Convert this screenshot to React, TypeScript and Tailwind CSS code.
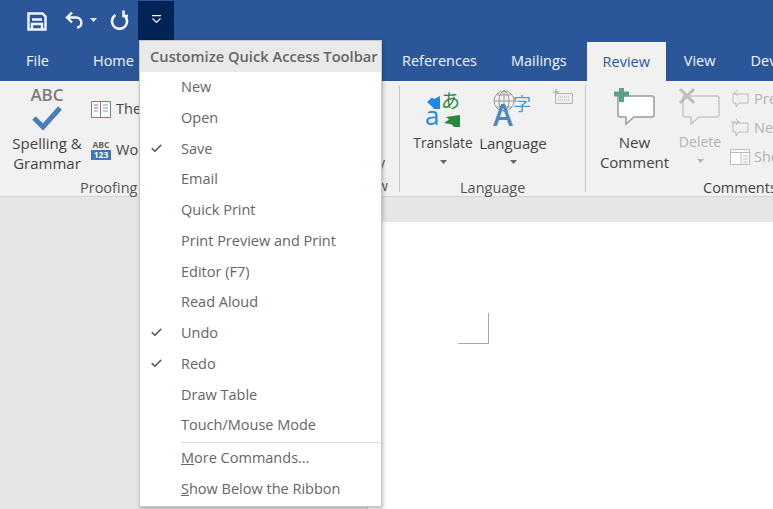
import type { ReactNode } from 'react'
import { Check } from 'lucide-react'

const font = { fontFamily: '"Open Sans", "Noto Sans", sans-serif' }

const menuItems = [
  { label: 'New' },
  { label: 'Open' },
  { label: 'Save', checked: true },
  { label: 'Email' },
  { label: 'Quick Print' },
  { label: 'Print Preview and Print' },
  { label: 'Editor (F7)' },
  { label: 'Read Aloud' },
  { label: 'Undo', checked: true },
  { label: 'Redo', checked: true },
  { label: 'Draw Table' },
  { label: 'Touch/Mouse Mode' },
]

function Caret({ className = '' }: { className?: string }) {
  return (
    <svg width="7" height="4" viewBox="0 0 7 4" className={className}>
      <path d="M0 0h7L3.500 4z" fill="currentColor" />
    </svg>
  )
}

function QuickAccess() {
  return (
    <div className="flex h-[40px] items-start pl-[27px] text-white">
      <svg width="20" height="19" viewBox="0 0 20 19" className="mt-[12px]" fill="none" stroke="#f2f5fa" strokeWidth="2.400">
        <path d="M1.500 1.500h14l3 3v13h-17z" />
        <path d="M5 7.500h10M5 17v-5h10v5" />
      </svg>
      <svg width="19" height="18" viewBox="0 0 19 18" className="ml-[18px] mt-[11px]" fill="none" stroke="#f2f5fa" strokeWidth="2.400">
        <path d="M7 1.500 2 6.500l5 5" />
        <path d="M2 6.500h9c7 0 7 10 1 10" />
      </svg>
      <Caret className="ml-[6px] mt-[18px] text-[#e6ecf5]" />
      <svg width="19" height="20" viewBox="0 0 19 20" className="ml-[13px] mt-[10px]" fill="none" stroke="#f2f5fa" strokeWidth="2.600">
        <path d="M5.500 5a7.500 7.500 0 1 0 8 0" />
        <path d="M13.500 .5v5.500h4.500" />
      </svg>
      <div className="ml-[9px] mt-px flex h-[39px] w-[36px] items-start justify-center bg-[#012456] pt-[14px]">
        <svg width="11" height="9" viewBox="0 0 11 9" fill="none" stroke="#f2f5fa" strokeWidth="1.200">
          <path d="M1 .6h9M1.500 3.500l4 4 4-4" />
        </svg>
      </div>
    </div>
  )
}

function Tabs() {
  return (
    <div className="flex h-[41px] items-center whitespace-nowrap text-[14.500px] text-[#f2f5fa] [&>span]:shrink-0">
      <span className="ml-[26px]">File</span>
      <span className="ml-[44px]">Home</span>
      <span className="ml-[268px]">References</span>
      <span className="ml-[34px]">Mailings</span>
      <span className="ml-[20px] flex h-[39px] w-[79px] items-center justify-center self-end bg-[#f1f1f1] text-[#2b579a]">
        Review
      </span>
      <span className="ml-[18px]">View</span>
      <span className="ml-[35px]">Developer</span>
    </div>
  )
}

function ProofingGroup() {
  return (
    <div className="relative flex w-[400px] shrink-0 flex-col border-r border-[#c6c6c6]">
      <div className="flex h-[94px] shrink-0">
        <div className="flex w-[94px] flex-col items-center text-center text-[15px] leading-[20px] text-[#444]">
          <span className="h-[21px] text-[17px] font-semibold leading-[19px] text-[#7b7b7b]">ABC</span>
          <svg width="30" height="24" viewBox="0 0 30 24" fill="none" stroke="#4a7fb5" strokeWidth="5" className="mb-[3px]">
            <path d="M2 12l9 9L28 2" />
          </svg>
          <span className="whitespace-nowrap">Spelling &amp;</span>
          <span>Grammar</span>
        </div>
        <div className="-ml-[3px] flex w-[60px] flex-col gap-[22px] pt-[15px] text-[14.500px] leading-[18px] text-[#444]">
          <div className="flex items-center gap-[5px]">
            <svg width="20" height="17" viewBox="0 0 20 17" fill="#fff" stroke="#5b87b8">
              <path d="M.5.500h9v16h-9zM9.500.500h10v16h-10z" />
              <path d="M3 4h4M3 7h4" stroke="#d9634c" />
              <path d="M3 10h4M12 4h5M12 7h5M12 10h5" stroke="#999" />
            </svg>
            <span>The</span>
          </div>
          <div className="flex items-center gap-[5px]">
            <div className="flex w-[20px] flex-col items-center font-bold text-[#666]">
              <span className="text-[8.500px] leading-[10px]">ABC</span>
              <span className="w-full bg-[#3f77b2] text-center text-[8.500px] leading-[10px] text-white">123</span>
            </div>
            <span>Wo</span>
          </div>
        </div>
      </div>
      <span className="ml-[80px] text-[14.500px] leading-[18px] text-[#555]">Proofing</span>
      <span className="absolute left-[378px] top-[69px] text-[14px] leading-[18px] text-[#555]">y</span>
      <span className="absolute left-[377px] top-[92px] text-[14px] leading-[18px] text-[#555]">w</span>
    </div>
  )
}

function LanguageGroup() {
  return (
    <div className="flex w-[186px] shrink-0 flex-col border-r border-[#c6c6c6]">
      <div className="flex h-[94px] shrink-0 text-[15px] leading-[20px] text-[#444]">
        <div className="ml-[11px] flex w-[64px] flex-col items-center pt-[5px]">
          <svg width="36" height="37" viewBox="0 0 36 37" className="overflow-visible">
            <path d="M15 6v13H9L7 16.500 2 12l5-4.500L9 9z" fill="#1f8ae0" />
            <text x="16" y="18" fontSize="19" fill="#2a8a3c" fontFamily='"Noto Sans CJK JP", sans-serif'>あ</text>
            <text x="0" y="35" fontSize="26" fill="#1f8ae0" fontFamily='"Open Sans", sans-serif'>a</text>
            <path d="M35 25v12H29l-2-2.500-8-1.500 5-3.500-3-2.500z" fill="#2a8a3c" />
          </svg>
          <span className="mt-[6px] text-[13.700px]">Translate</span>
          <Caret className="mt-[7px] text-[#666]" />
        </div>
        <div className="ml-[4px] flex w-[68px] flex-col items-center pt-[5px]">
          <svg width="42" height="38" viewBox="0 0 42 38" className="overflow-visible">
            <circle cx="12" cy="11" r="10" fill="none" stroke="#9a9a9a" />
            <path d="M2 11h20M12 1v20M5 5h14M5 17h14" stroke="#9a9a9a" />
            <ellipse cx="12" cy="11" rx="5" ry="10" fill="none" stroke="#9a9a9a" />
            <text x="1" y="36" fontSize="30" fill="#4d86c0" fontFamily='"Open Sans", sans-serif' fontWeight="600">A</text>
            <text x="21" y="21" fontSize="18" fill="#4d9bd0" fontFamily='"Noto Sans CJK JP", sans-serif'>字</text>
          </svg>
          <span className="mt-[5px]">Language</span>
          <Caret className="mt-[7px] text-[#666]" />
        </div>
        <svg width="20" height="16" viewBox="0 0 20 16" className="ml-[6px] mt-[4px]" fill="#efeceb" stroke="#b5b5b5">
          <path d="M2.500 4.500h17v10h-17z" />
          <path d="M5 8h12M5 11h12" strokeDasharray="1 1" />
          <path d="M3 0v6M0 3h6" stroke="#a9bdb3" strokeWidth="1.500" />
        </svg>
      </div>
      <span className="ml-[60px] text-[14.500px] leading-[18px] text-[#555]">Language</span>
    </div>
  )
}

function CommentBubble({ faded = false, children }: { faded?: boolean; children?: ReactNode }) {
  return (
    <svg width="42" height="38" viewBox="0 0 42 38" fill={faded ? '#f3f0f2' : '#fff'} stroke={faded ? '#c6c6c6' : '#9b9b9b'} strokeWidth="1.500">
      <path d="M4 8h34a2 2 0 0 1 2 2v17a2 2 0 0 1-2 2H20l-8 7v-7H6a2 2 0 0 1-2-2z" />
      {children}
    </svg>
  )
}

function CommentsGroup() {
  return (
    <div className="flex flex-col">
      <div className="flex h-[94px] shrink-0 text-[15px] leading-[20px]">
        <div className="flex w-[92px] flex-col items-center pl-[5px] pt-[3px] text-center text-[#444]">
          <CommentBubble>
            <path d="M0 6h15M7.500 0v14" stroke="#5f9f88" strokeWidth="5" />
          </CommentBubble>
          <span className="mt-[6px]">New</span>
          <span>Comment</span>
        </div>
        <div className="flex w-[44px] flex-col items-center pt-[3px] text-[#b4b4b4]">
          <CommentBubble faded>
            <path d="M1 1l14 14M15 1 1 15" stroke="#bdbdbd" strokeWidth="3" />
          </CommentBubble>
          <span className="mt-[6px] text-[14px]">Delete</span>
          <Caret className="mt-[7px]" />
        </div>
        <div className="ml-[8px] flex flex-col gap-[9px] pt-[4px] text-[14.500px] text-[#b4b4b4]">
          <div className="flex items-center gap-[4px]">
            <svg width="20" height="20" viewBox="0 0 20 20" fill="none" stroke="#bbb">
              <path d="M3 5h15v9H9l-3 4v-4H3zM8 1 4 4l4 3" />
            </svg>
            <span>Previous</span>
          </div>
          <div className="flex items-center gap-[4px]">
            <svg width="20" height="20" viewBox="0 0 20 20" fill="none" stroke="#bbb">
              <path d="M3 5h15v9H9l-3 4v-4H3zM1 4h8M6 1l3 3-3 3" />
            </svg>
            <span>Next</span>
          </div>
          <div className="flex items-center gap-[4px]">
            <svg width="20" height="16" viewBox="0 0 20 16" fill="#fff" stroke="#bbb">
              <path d="M.5.500h19v15H.5zM.5 3.500h19M11 3.500v12M13 7h5M13 10h5M13 13h5" />
            </svg>
            <span>Show</span>
          </div>
        </div>
      </div>
      <span className="ml-[117px] text-[14.500px] leading-[18px] text-[#444]">Comments</span>
    </div>
  )
}

function QuickAccessMenu() {
  return (
    <div className="absolute left-[139px] top-[40px] w-[243px] border border-[#c6c6c6] bg-white pb-[2px] text-[14.500px] text-[#666] shadow-[1px_2px_4px_rgba(0,0,0,0.25)]">
      <div className="flex h-[30.500px] items-center whitespace-nowrap bg-[#e9e9e9] pl-[10px] text-[14.700px] font-semibold text-[#666]">
        Customize Quick Access Toolbar
      </div>
      <div className="flex flex-col">
        {menuItems.map((item) => (
          <div key={item.label} className="relative flex h-[30.750px] items-center pl-[41px]">
            {item.checked && <Check className="absolute left-[10px] h-[13px] w-[13px] text-[#555]" strokeWidth={3} />}
            {item.label}
          </div>
        ))}
      </div>
      <div className="ml-[41px] mt-[1px] border-t border-[#dcdcdc]" />
      <div className="flex h-[31px] items-center pl-[41px]">
        <span><span className="underline">M</span>ore Commands...</span>
      </div>
      <div className="flex h-[30px] items-center pl-[41px]">
        <span><span className="underline">S</span>how Below the Ribbon</span>
      </div>
    </div>
  )
}

export default function App() {
  return (
    <div className="relative flex h-[509px] w-[773px] flex-col overflow-hidden bg-[#e6e6e6]" style={font}>
      <div className="bg-[#2b579a]">
        <QuickAccess />
        <Tabs />
      </div>
      <div className="flex h-[116px] border-b border-[#d4d4d4] bg-[#f1f1f1] py-[4px]">
        <ProofingGroup />
        <LanguageGroup />
        <CommentsGroup />
      </div>
      <div className="ml-[367px] mt-[25px] flex flex-1 items-start border-l border-[#c6c6c6] bg-white pl-[90px] pt-[91px]">
        <div className="h-[31px] w-[31px] border-b border-r border-[#a6a6a6]" />
      </div>
      <QuickAccessMenu />
    </div>
  )
}
